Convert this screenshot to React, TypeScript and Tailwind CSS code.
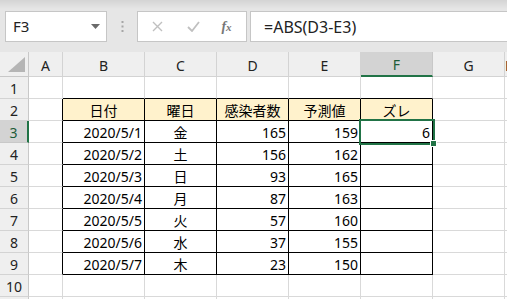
import React from "react";

const cols = ["A", "B", "C", "D", "E", "F", "G", "H"];
const colW = ["w-[34px]", "w-[82px]", "w-[72px]", "w-[72px]", "w-[72px]", "w-[72px]", "w-[72px]", "flex-1"];

const header = ["日付", "曜日", "感染者数", "予測値", "ズレ"];
const data: [string, string, number, number][] = [
  ["2020/5/1", "金", 165, 159],
  ["2020/5/2", "土", 156, 162],
  ["2020/5/3", "日", 93, 165],
  ["2020/5/4", "月", 87, 163],
  ["2020/5/5", "火", 57, 160],
  ["2020/5/6", "水", 37, 155],
  ["2020/5/7", "木", 23, 150],
];

const cellText = (r: number, c: number): { text: string; align: string } => {
  if (r === 2 && c >= 1 && c <= 5) return { text: header[c - 1], align: "justify-center" };
  if (r >= 3 && r <= 9) {
    const d = data[r - 3];
    if (c === 1) return { text: d[0], align: "justify-end" };
    if (c === 2) return { text: d[1], align: "justify-center" };
    if (c === 3) return { text: String(d[2]), align: "justify-end" };
    if (c === 4) return { text: String(d[3]), align: "justify-end" };
    if (c === 5 && r === 3) return { text: String(Math.abs(d[2] - d[3])), align: "justify-end" };
  }
  return { text: "", align: "justify-end" };
};

function Cell({ r, c }: { r: number; c: number }) {
  // c: 0 = A ... 7 = H
  const rightBlack = r >= 2 && r <= 9 && c >= 0 && c <= 5;
  const bottomBlack = r >= 1 && r <= 9 && c >= 1 && c <= 5;
  const fill = r === 2 && c >= 1 && c <= 5;
  const selected = r === 3 && c === 5;
  const { text, align } = cellText(r, c);
  return (
    <div
      className={`relative flex items-center h-[22px] shrink-0 border-r border-b px-[2px] text-[14px] text-black ${align} ${colW[c]} ${
        rightBlack ? "border-r-black" : "border-r-[#d9d9d9]"
      } ${bottomBlack ? "border-b-black" : "border-b-[#d9d9d9]"} ${fill ? "bg-[#fff2cc]" : "bg-white"}`}
    >
      <span className="leading-none pt-[2px]">{text}</span>
      {selected && (
        <div className="absolute -left-[2px] -top-[2px] w-[76px] h-[26px] border-2 border-[#217346] z-10">
          <div className="absolute -right-[4px] -bottom-[4px] w-[7px] h-[7px] bg-[#217346] border border-white" />
        </div>
      )}
    </div>
  );
}

export default function App() {
  const rows = Array.from({ length: 11 }, (_, i) => i + 1);
  return (
    <div className="w-[507px] h-[299px] overflow-hidden bg-[#e6e6e6] font-['Noto_Sans','Noto_Sans_CJK_JP',sans-serif]">
      {/* formula bar */}
      <div className="h-[52px] flex items-start pt-[11px] bg-[linear-gradient(#d4d4d4,#e6e6e6_9px)]">
        <div className="ml-[5px] w-[102px] h-[31px] bg-white border border-[#c6c6c6] flex items-center justify-between pl-[7px] pr-[6px]">
          <span className="text-[15px] text-[#222] leading-none">F3</span>
          <svg width="9" height="5" viewBox="0 0 9 5">
            <path d="M0 0h9L4.5 5z" fill="#6a6a6a" />
          </svg>
        </div>
        <div className="w-[30px] h-[31px] flex items-center justify-center">
          <svg width="3" height="11" viewBox="0 0 3 11">
            <rect x="0.5" y="0" width="2" height="2" fill="#a6a6a6" />
            <rect x="0.5" y="4.5" width="2" height="2" fill="#a6a6a6" />
            <rect x="0.5" y="9" width="2" height="2" fill="#a6a6a6" />
          </svg>
        </div>
        <div className="w-[110px] h-[31px] bg-white border border-[#c6c6c6] flex items-center">
          <div className="w-[37px] flex justify-center pl-[2px]">
            <svg width="11" height="11" viewBox="0 0 11 11">
              <path d="M1 1l9 9M10 1l-9 9" stroke="#c0c0c0" strokeWidth="1.4" />
            </svg>
          </div>
          <div className="w-[36px] flex justify-center">
            <svg width="13" height="11" viewBox="0 0 13 11">
              <path d="M1 6l4 4 7-9" stroke="#c0c0c0" strokeWidth="1.8" fill="none" />
            </svg>
          </div>
          <div className="flex-1 flex justify-center pr-[4px]">
            <span className="font-['Liberation_Serif',serif] italic font-bold text-[14px] text-[#777] leading-none">
              f<span className="text-[11px]">x</span>
            </span>
          </div>
        </div>
        <div className="ml-[3px] flex-1 h-[31px] bg-white border border-r-0 border-[#c6c6c6] flex items-center pl-[13px]">
          <span className="text-[16px] text-[#222] leading-none">=ABS(D3-E3)</span>
        </div>
      </div>

      {/* column header */}
      <div className="flex h-[25px]">
        <div className="w-[29px] shrink-0 bg-[#efefef] border-r border-b border-[#c8c8c8] relative">
          <svg className="absolute left-[8px] top-[5px]" width="17" height="15" viewBox="0 0 17 15">
            <path d="M17 0v15H0z" fill="#b5b5b5" />
          </svg>
        </div>
        {cols.map((c, i) => (
          <div
            key={c}
            className={`shrink-0 flex items-center justify-center text-[14px] ${colW[i]} ${
              c === "F"
                ? "bg-[#d3d3d3] border-r border-r-[#c8c8c8] border-b-2 border-b-[#217346] text-[#1e5c38]"
                : "bg-[#efefef] border-r border-b border-[#d3d3d3] text-[#222]"
            }`}
          >
            <span className="pt-[2px]">{c}</span>
          </div>
        ))}
      </div>

      {/* rows */}
      {rows.map((r) => (
        <div key={r} className="flex">
          <div
            className={`w-[29px] shrink-0 h-[22px] flex items-center justify-center text-[14px] border-b ${
              r === 3
                ? "bg-[#d3d3d3] border-r-2 border-r-[#217346] border-b-[#c8c8c8] text-[#1e5c38]"
                : "bg-[#efefef] border-r border-r-[#c8c8c8] border-b-[#d3d3d3] text-[#222]"
            }`}
          >
            <span className="pt-[1px]">{r}</span>
          </div>
          {cols.map((_, c) => (
            <Cell key={c} r={r} c={c} />
          ))}
        </div>
      ))}
    </div>
  );
}
